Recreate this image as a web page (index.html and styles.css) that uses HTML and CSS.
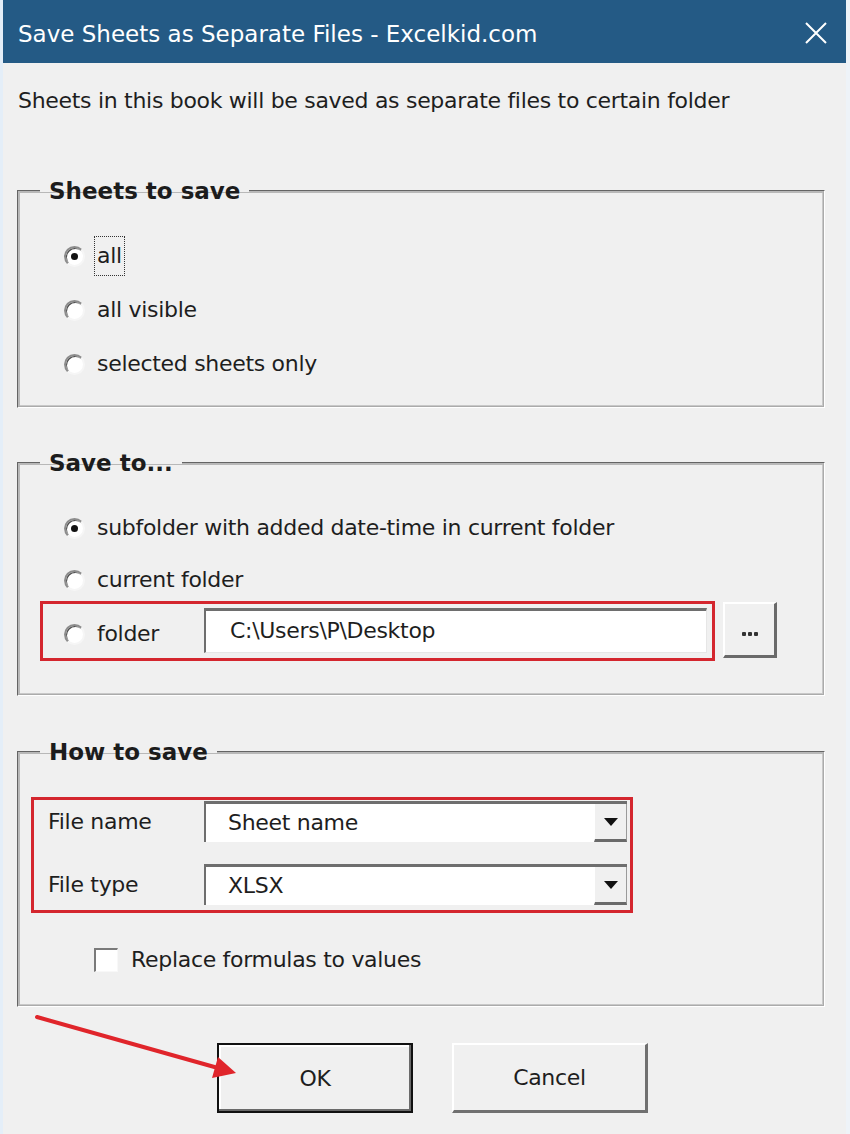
FILE: index.html
```html
<!DOCTYPE html>
<html>
<head>
<meta charset="utf-8">
<link rel="stylesheet" href="styles.css">
</head>
<body>
<div class="window">
  <div class="titlebar">
    <span class="title">Save Sheets as Separate Files - Excelkid.com</span>
    <svg class="close" width="24" height="24" viewBox="0 0 24 24"><path d="M2 2 L22 22 M22 2 L2 22" stroke="#ffffff" stroke-width="2" fill="none"/></svg>
  </div>
  <div class="content">
    <p class="desc">Sheets in this book will be saved as separate files to certain folder</p>

    <fieldset class="group g1">
      <legend>Sheets to save</legend>
      <div class="rows">
        <div class="row"><span class="radio checked"></span><span class="label focus">all</span></div>
        <div class="row"><span class="radio"></span><span class="label">all visible</span></div>
        <div class="row"><span class="radio"></span><span class="label">selected sheets only</span></div>
      </div>
    </fieldset>

    <fieldset class="group g2">
      <legend>Save to...</legend>
      <div class="rows">
        <div class="row"><span class="radio checked"></span><span class="label">subfolder with added date-time in current folder</span></div>
        <div class="row row-short"><span class="radio"></span><span class="label">current folder</span></div>
        <div class="folder-line">
          <div class="redbox folder-box">
            <span class="radio"></span><span class="label folder-label">folder</span>
            <div class="textbox">C:\Users\P\Desktop</div>
          </div>
          <div class="browse"><span class="dot"></span><span class="dot"></span><span class="dot"></span></div>
        </div>
      </div>
    </fieldset>

    <fieldset class="group g3">
      <legend>How to save</legend>
      <div class="rows">
        <div class="redbox combos">
          <div class="combo-row">
            <span class="clabel">File name</span>
            <div class="combo"><span class="cval">Sheet name</span><span class="drop"><svg width="14" height="8" viewBox="0 0 14 8"><path d="M0 0 H14 L7 8 Z" fill="#111"/></svg></span></div>
          </div>
          <div class="combo-row">
            <span class="clabel">File type</span>
            <div class="combo"><span class="cval">XLSX</span><span class="drop"><svg width="14" height="8" viewBox="0 0 14 8"><path d="M0 0 H14 L7 8 Z" fill="#111"/></svg></span></div>
          </div>
        </div>
        <div class="check-row"><span class="checkbox"></span><span class="label">Replace formulas to values</span></div>
      </div>
    </fieldset>

    <div class="buttons">
      <div class="btn btn-default">OK</div>
      <div class="btn">Cancel</div>
    </div>
  </div>
  <svg class="arrow" width="850" height="1134" viewBox="0 0 850 1134">
    <line x1="37" y1="1017" x2="218" y2="1068" stroke="#e0252b" stroke-width="4" stroke-linecap="round"/>
    <polygon points="236,1073 218,1057 212,1078" fill="#e0252b"/>
  </svg>
</div>
</body>
</html>
```

FILE: styles.css
```css
html, body {
  margin: 0;
  padding: 0;
}
body {
  font-family: "DejaVu Sans", "Liberation Sans", Arial, sans-serif;
  color: #1e1e1e;
  background: #f0f0f0;
}
.window {
  position: relative;
  width: 850px;
  height: 1134px;
  background: #f0f0f0;
  box-sizing: border-box;
  border-left: 3px solid #e4eef8;
  border-right: 4px solid #eef3f8;
  overflow: hidden;
}
.titlebar {
  height: 63px;
  margin: 0 -4px 0 -3px;
  background: #245a85;
  display: flex;
  align-items: center;
  justify-content: space-between;
  padding: 0 22px 0 18px;
  color: #ffffff;
}
.title {
  font-size: 23px;
  letter-spacing: 0;
  margin-top: 4px;
}
.close {
  display: block;
  margin-top: 2px;
}
.content {
  padding: 0 21px 0 14px;
}
.desc {
  margin: 23px 0 0 1px;
  height: 30px;
  line-height: 30px;
  font-size: 22px;
  letter-spacing: -0.3px;
}
.group {
  margin: 60px 0 0 0;
  padding: 0;
  border: 2px groove #e8e8e8;
  border-color: #b8b8b8 #ffffff #ffffff #b8b8b8;
  box-shadow: 1px 1px 0 #b8b8b8 inset, -1px -1px 0 #c8c8c8 inset;
}
.group + .group {
  margin-top: 40px;
}
.g3 {
  margin-top: 41px !important;
}
.group legend {
  margin-left: 21px;
  padding: 0 9px;
  font-weight: bold;
  font-size: 23px;
  line-height: 30px;
  height: 30px;
  color: #1c1c1c;
  letter-spacing: 0;
}
.rows {
  display: flex;
  flex-direction: column;
}
.g1 .rows {
  padding: 23px 0 15px 0;
}
.g2 .rows {
  padding: 23px 0 33px 0;
}
.g3 .rows {
  padding: 30px 0 20px 0;
}
.row {
  height: 54px;
  display: flex;
  align-items: center;
  padding-left: 45px;
}
.row-short {
  height: 46px;
  padding-top: 4px;
  box-sizing: border-box;
}
.radio {
  width: 21px;
  height: 21px;
  box-sizing: border-box;
  border-radius: 50%;
  background: #ffffff;
  border: 2px solid;
  border-color: #8c8c8c #f6f6f6 #f6f6f6 #8c8c8c;
  box-shadow: inset 1px 1px 0 #505050;
  position: relative;
  flex: none;
}
.radio.checked::after {
  content: "";
  position: absolute;
  left: 5px;
  top: 5px;
  width: 7px;
  height: 7px;
  border-radius: 50%;
  background: #111;
}
.label {
  font-size: 22px;
  margin-left: 12px;
  line-height: 30px;
  letter-spacing: -0.3px;
}
.label.focus {
  margin-left: 9px;
  border: 1px dotted #333;
  padding: 4px 2px;
}
.folder-line {
  display: flex;
  align-items: flex-start;
  margin-left: 21px;
}
.redbox {
  border: 3px solid #d4262e;
}
.folder-box {
  width: 675px;
  height: 60px;
  box-sizing: border-box;
  display: flex;
  align-items: center;
  padding-left: 21px;
}
.folder-box .radio {
  margin-top: 6px;
}
.folder-label {
  margin-top: 6px;
  width: 107px;
  flex: none;
}
.textbox {
  width: 503px;
  height: 45px;
  box-sizing: border-box;
  background: #ffffff;
  border-top: 3px solid #6e6e6e;
  border-left: 2px solid #6e6e6e;
  border-right: 1px solid #e6e6e6;
  border-bottom: 1px solid #e6e6e6;
  font-size: 22px;
  letter-spacing: -0.3px;
  line-height: 40px;
  padding-left: 24px;
  margin-top: -2px;
}
.browse {
  margin-left: 8px;
  margin-top: 1px;
  width: 54px;
  height: 56px;
  box-sizing: border-box;
  background: #f0f0f0;
  border-top: 2px solid #ffffff;
  border-left: 2px solid #ffffff;
  border-right: 3px solid #6a6a6a;
  border-bottom: 3px solid #6a6a6a;
  display: flex;
  align-items: center;
  justify-content: center;
  gap: 2px;
  padding-top: 8px;
}
.dot {
  width: 4px;
  height: 4px;
  background: #333;
  border-radius: 1px;
}
.combos {
  margin-left: 12px;
  width: 602px;
  box-sizing: border-box;
  padding: 1px 3px 5px 14px;
  display: flex;
  flex-direction: column;
  gap: 22px;
}
.combo-row {
  display: flex;
  align-items: center;
  height: 41px;
}
.clabel {
  font-size: 22px;
  letter-spacing: -0.3px;
  width: 156px;
  flex: none;
}
.combo {
  flex: 1;
  height: 41px;
  box-sizing: border-box;
  background: #ffffff;
  border-top: 3px solid #6e6e6e;
  border-left: 2px solid #6e6e6e;
  display: flex;
  align-items: stretch;
}
.cval {
  flex: 1;
  font-size: 22px;
  letter-spacing: -0.3px;
  line-height: 37px;
  padding-left: 22px;
}
.drop {
  width: 31px;
  background: #f0f0f0;
  border-left: 1px solid #ffffff;
  border-bottom: 3px solid #6a6a6a;
  border-right: 1px solid #9a9a9a;
  display: flex;
  align-items: center;
  justify-content: center;
}
.check-row {
  height: 50px;
  margin-top: 22px;
  display: flex;
  align-items: center;
  padding-left: 75px;
}
.checkbox {
  width: 24px;
  height: 24px;
  box-sizing: border-box;
  background: #ffffff;
  border-top: 2px solid #7a7a7a;
  border-left: 2px solid #7a7a7a;
  border-right: 1px solid #f8f8f8;
  border-bottom: 1px solid #f8f8f8;
  flex: none;
}
.check-row .label {
  margin-left: 13px;
}
.buttons {
  display: flex;
  gap: 39px;
  margin: 36px 0 0 200px;
}
.btn {
  width: 196px;
  height: 70px;
  box-sizing: border-box;
  background: #f0f0f0;
  border-top: 2px solid #ffffff;
  border-left: 2px solid #ffffff;
  border-right: 3px solid #707070;
  border-bottom: 3px solid #707070;
  font-size: 22px;
  letter-spacing: -0.3px;
  display: flex;
  align-items: center;
  justify-content: center;
}
.btn-default {
  border: 2px solid #111111;
  box-shadow: inset -2px -2px 0 #6a6a6a, inset 2px 2px 0 #ffffff;
}
.arrow {
  position: absolute;
  left: -3px;
  top: 0;
  pointer-events: none;
}
```
